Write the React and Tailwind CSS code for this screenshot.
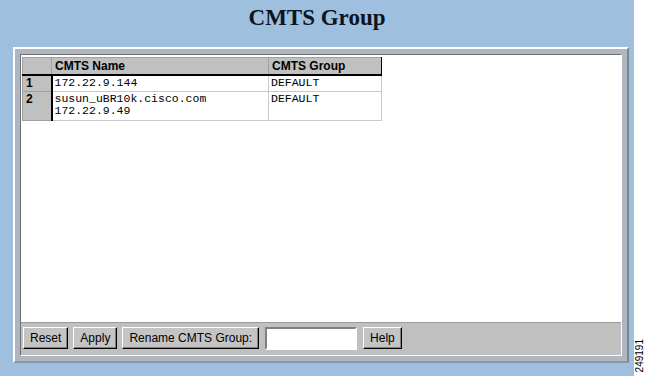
export default function App() {
  const rows = [
    { n: "1", name: ["172.22.9.144"], group: "DEFAULT", h: "h-[17px]" },
    { n: "2", name: ["susun_uBR10k.cisco.com", "172.22.9.49"], group: "DEFAULT", h: "h-[29px]" },
  ];

  const btn =
    "h-[22px] px-[6px] bg-[#c4c4c4] border border-t-white border-l-white border-r-black border-b-black text-[12px] text-black leading-none shadow-[inset_-1px_-1px_0_#808080]";

  return (
    <div className="w-[647px] h-[376px] flex bg-[#9fbfdf] font-['Liberation_Sans',Arial,sans-serif] overflow-hidden">
      <div className="w-[634px] flex flex-col">
        {/* title */}
        <div className="h-[47px] flex justify-center pt-[3px]">
          <h1 className="font-['Liberation_Serif','Times_New_Roman',serif] font-bold text-[23px] text-[#0d1520] leading-[30px]">
            CMTS Group
          </h1>
        </div>

        {/* framed panel */}
        <div className="ml-[13px] w-[616px] h-[316px] flex flex-col border-2 border-t-white border-l-white border-r-[#7a8696] border-b-[#8a96a8] bg-[#aeb6c2] p-[5px]">
          <div className="flex-1 flex flex-col border border-t-[#707070] border-l-[#707070] border-r-white border-b-white">
            <div className="flex-1 bg-white pt-[2px] pl-[1px]">
              <table className="border-collapse text-left">
                <thead>
                  <tr className="h-[17px] bg-[#c0c0c0]">
                    <th className="w-[29px] border border-[#a0a0a0] border-b-2 border-b-black"></th>
                    <th className="w-[217px] border border-[#a0a0a0] border-b-2 border-b-black px-[3px] text-[12px] font-bold leading-none">
                      CMTS Name
                    </th>
                    <th className="w-[113px] border border-[#a0a0a0] border-b-2 border-b-black border-r-black px-[3px] text-[12px] font-bold leading-none">
                      CMTS Group
                    </th>
                  </tr>
                </thead>
                <tbody>
                  {rows.map((r) => (
                    <tr key={r.n} className={r.h}>
                      <td className="bg-[#c0c0c0] border border-[#a0a0a0] border-r-2 border-r-black align-top px-[3px] pt-[1px] text-[12px] font-bold leading-none">
                        {r.n}
                      </td>
                      <td className="border border-[#c8c8c8] align-top px-[2px] pt-[1px] font-['Liberation_Mono','Courier_New',monospace] text-[11.5px] leading-[12px]">
                        {r.name.map((l) => (
                          <div key={l}>{l}</div>
                        ))}
                      </td>
                      <td className="border border-[#c8c8c8] align-top px-[2px] pt-[1px] font-['Liberation_Mono','Courier_New',monospace] text-[11.5px] leading-[12px]">
                        {r.group}
                      </td>
                    </tr>
                  ))}
                </tbody>
              </table>
            </div>

            {/* button bar */}
            <div className="h-[33px] bg-[#c0c0c0] border-t border-[#9a9a9a] flex items-center gap-[5px] pl-[2px] pb-[2px]">
              <button className={btn}>Reset</button>
              <button className={btn}>Apply</button>
              <button className={btn}>Rename CMTS Group:</button>
              <input
                className="ml-[1px] w-[92px] h-[23px] bg-white border-2 border-t-[#808080] border-l-[#808080] border-r-white border-b-white outline-none"
                defaultValue=""
              />
              <button className={`${btn} ml-[1px]`}>Help</button>
            </div>
          </div>
        </div>
      </div>

      {/* right strip with figure number */}
      <div className="w-[13px] bg-white flex flex-col justify-end pb-[4px]">
        <span className="block [writing-mode:vertical-rl] rotate-180 text-[10px] leading-[12px] text-black">
          249191
        </span>
      </div>
    </div>
  );
}
